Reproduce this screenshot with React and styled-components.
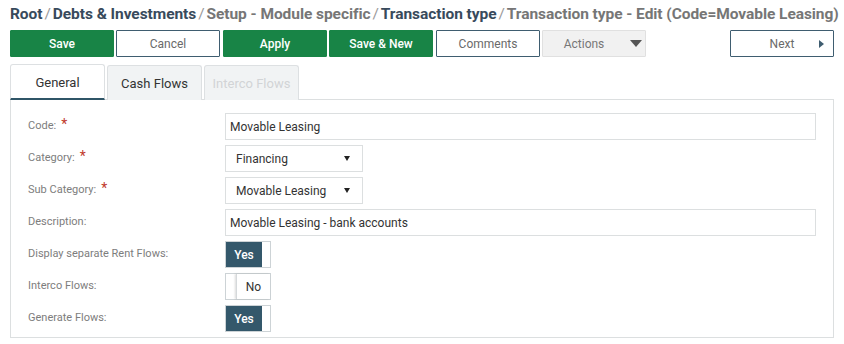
import React from "react";
import styled, { createGlobalStyle } from "styled-components";

const GlobalStyle = createGlobalStyle`
  body {
    margin: 0;
    background: #fff;
    font-family: Roboto, "Liberation Sans", sans-serif;
  }
`;

const Page = styled.div`
  width: 844px;
  height: 344px;
  padding: 0 10px;
  box-sizing: border-box;
`;

const Crumbs = styled.div`
  height: 30px;
  display: flex;
  align-items: center;
  font-size: 15.5px;
  font-weight: 700;
  white-space: nowrap;
  letter-spacing: -0.06px;
  padding-bottom: 2px;
  box-sizing: border-box;
`;

const Crumb = styled.span`
  color: ${(p) => (p.$dark ? "#384a5c" : "#767676")};
`;

const Sep = styled.span`
  color: #9a9a9a;
  font-weight: 400;
  margin: 0 2px;
`;

const Toolbar = styled.div`
  display: flex;
  height: 27px;
  gap: 2px;
`;

const Btn = styled.button`
  width: ${(p) => p.$w || 104}px;
  height: 27px;
  box-sizing: border-box;
  font-family: inherit;
  font-size: 12px;
  border-radius: 1px;
  cursor: pointer;
  display: flex;
  align-items: center;
  justify-content: center;
  padding: 0;
  ${(p) =>
    p.$kind === "green"
      ? `background:#188446;border:1px solid #188446;color:#fff;font-weight:500;`
      : p.$kind === "grey"
      ? `background:#f1f1f1;border:1px solid #e0e0e0;color:#777;`
      : `background:#fff;border:1px solid #3f5d70;color:#6a6a6a;`}
`;

const Spacer = styled.div`
  flex: 1;
`;

const Caret = styled.span`
  width: 0;
  height: 0;
  border-left: 6px solid transparent;
  border-right: 6px solid transparent;
  border-top: 7px solid #555;
  margin-left: 26px;
  margin-right: -18px;
`;

const RightCaret = styled.span`
  width: 0;
  height: 0;
  border-top: 4px solid transparent;
  border-bottom: 4px solid transparent;
  border-left: 5px solid #3f5d70;
  position: absolute;
  right: 9px;
  top: 9px;
`;

const NextBtn = styled(Btn)`
  position: relative;
`;

const Tabs = styled.div`
  display: flex;
  gap: 2px;
  margin-top: 8px;
  height: 35px;
  align-items: flex-end;
`;

const Tab = styled.div`
  width: 95px;
  height: 35px;
  box-sizing: border-box;
  display: flex;
  align-items: center;
  justify-content: center;
  font-size: 13px;
  border: 1px solid #dde0e2;
  border-bottom: none;
  border-radius: 3px 3px 0 0;
  background: ${(p) => (p.$active ? "#fff" : "#f1f3f4")};
  color: ${(p) => (p.$disabled ? "#d2d4d6" : "#333")};
  ${(p) => p.$active && `border-bottom: 2px solid #2f5567; height: 36px; padding-top: 1px;`}
`;

const Panel = styled.div`
  border: 1px solid #dcdfe0;
  margin-top: -1px;
  padding: 13px 17px 5px 17px;
  display: grid;
  grid-template-columns: 197px 1fr;
  grid-auto-rows: 27px;
  row-gap: 5px;
`;

const Label = styled.div`
  font-size: 11px;
  color: #7d7d7d;
  display: flex;
  align-items: center;
  padding-bottom: 2px;
`;

const Star = styled.span`
  color: #c0392b;
  font-size: 14px;
  margin-left: 5px;
  align-self: flex-start;
  margin-top: 3px;
`;

const Input = styled.div`
  height: 27px;
  border: 1px solid #dcdfe0;
  box-sizing: border-box;
  font-size: 12px;
  color: #333;
  display: flex;
  align-items: center;
  padding-left: 4px;
`;

const Select = styled(Input)`
  width: 138px;
  padding: 0 10px;
  justify-content: space-between;
  &::after {
    content: "";
    border-left: 3.5px solid transparent;
    border-right: 3.5px solid transparent;
    border-top: 5px solid #222;
    margin-right: 2px;
  }
`;

const Toggle = styled.div`
  width: 46px;
  height: 27px;
  box-sizing: border-box;
  border: 1px solid #cdd3d6;
  display: flex;
  background: #fff;
`;

const Knob = styled.div`
  display: flex;
  align-items: center;
  justify-content: center;
  font-size: 12px;
  ${(p) =>
    p.$on
      ? `width:36px;background:#34586b;color:#fff;font-weight:500;`
      : `width:35px;margin-left:10px;color:#333;box-shadow:-1px 0 2px rgba(0,0,0,0.15);border-left:1px solid #d5d9db;`}
`;

const Field = ({ label, required, children }) => (
  <>
    <Label>
      {label}
      {required && <Star>*</Star>}
    </Label>
    <div>{children}</div>
  </>
);

const Switch = ({ on }) => (
  <Toggle>
    <Knob $on={on}>{on ? "Yes" : "No"}</Knob>
  </Toggle>
);

export default function App() {
  return (
    <Page>
      <GlobalStyle />
      <Crumbs>
        <Crumb $dark>Root</Crumb>
        <Sep>/</Sep>
        <Crumb $dark>Debts &amp; Investments</Crumb>
        <Sep>/</Sep>
        <Crumb>Setup - Module specific</Crumb>
        <Sep>/</Sep>
        <Crumb $dark>Transaction type</Crumb>
        <Sep>/</Sep>
        <Crumb>Transaction type - Edit (Code=Movable Leasing)</Crumb>
      </Crumbs>
      <Toolbar>
        <Btn $kind="green">Save</Btn>
        <Btn>Cancel</Btn>
        <Btn $kind="green" style={{ marginLeft: 1 }}>Apply</Btn>
        <Btn $kind="green">Save &amp; New</Btn>
        <Btn style={{ marginLeft: 1 }}>Comments</Btn>
        <Btn $kind="grey">
          Actions
          <Caret />
        </Btn>
        <Spacer />
        <NextBtn>
          Next
          <RightCaret />
        </NextBtn>
      </Toolbar>
      <Tabs>
        <Tab $active>General</Tab>
        <Tab>Cash Flows</Tab>
        <Tab $disabled>Interco Flows</Tab>
      </Tabs>
      <Panel>
        <Field label="Code:" required>
          <Input>Movable Leasing</Input>
        </Field>
        <Field label="Category:" required>
          <Select>Financing</Select>
        </Field>
        <Field label="Sub Category:" required>
          <Select>Movable Leasing</Select>
        </Field>
        <Field label="Description:">
          <Input>Movable Leasing - bank accounts</Input>
        </Field>
        <Field label="Display separate Rent Flows:">
          <Switch on />
        </Field>
        <Field label="Interco Flows:">
          <Switch on={false} />
        </Field>
        <Field label="Generate Flows:">
          <Switch on />
        </Field>
      </Panel>
    </Page>
  );
}
